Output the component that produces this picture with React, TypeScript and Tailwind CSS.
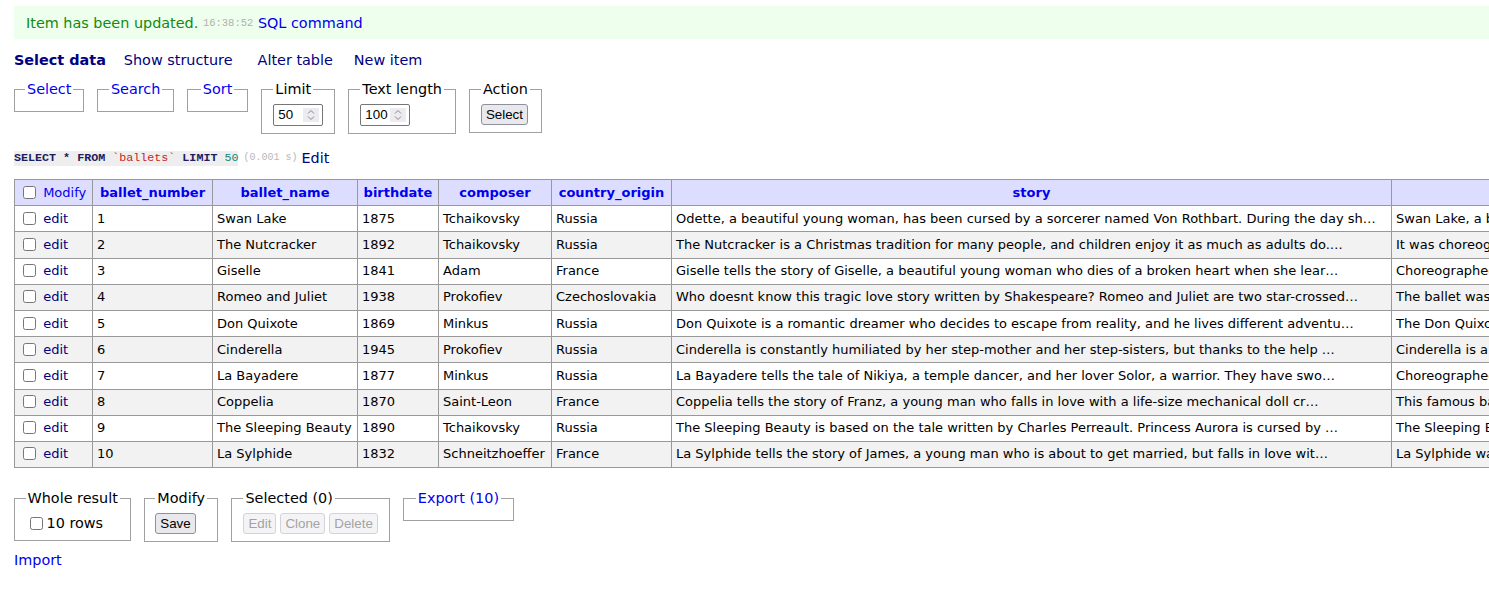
import React from "react";

const rows: [number, string, number, string, string, string, string][] = [
  [1, "Swan Lake", 1875, "Tchaikovsky", "Russia", "Odette, a beautiful young woman, has been cursed by a sorcerer named Von Rothbart. During the day sh…", "Swan Lake, a ballet in four acts, was first performed at the Bolshoi Theatre in Moscow…"],
  [2, "The Nutcracker", 1892, "Tchaikovsky", "Russia", "The Nutcracker is a Christmas tradition for many people, and children enjoy it as much as adults do.…", "It was choreographed by Marius Petipa and Lev Ivanov and premiered in Saint Petersburg…"],
  [3, "Giselle", 1841, "Adam", "France", "Giselle tells the story of Giselle, a beautiful young woman who dies of a broken heart when she lear…", "Choreographed by Jean Coralli and Jules Perrot, it premiered at the Paris Opera…"],
  [4, "Romeo and Juliet", 1938, "Prokofiev", "Czechoslovakia", "Who doesnt know this tragic love story written by Shakespeare? Romeo and Juliet are two star-crossed…", "The ballet was first staged in Brno and later became a classic of the Kirov Ballet…"],
  [5, "Don Quixote", 1869, "Minkus", "Russia", "Don Quixote is a romantic dreamer who decides to escape from reality, and he lives different adventu…", "The Don Quixote ballet was originally staged by Marius Petipa for the Bolshoi Ballet…"],
  [6, "Cinderella", 1945, "Prokofiev", "Russia", "Cinderella is constantly humiliated by her step-mother and her step-sisters, but thanks to the help …", "Cinderella is a ballet composed during the Second World War and premiered in Moscow…"],
  [7, "La Bayadere", 1877, "Minkus", "Russia", "La Bayadere tells the tale of Nikiya, a temple dancer, and her lover Solor, a warrior. They have swo…", "Choreographed by Marius Petipa, it was first presented by the Imperial Ballet…"],
  [8, "Coppelia", 1870, "Saint-Leon", "France", "Coppelia tells the story of Franz, a young man who falls in love with a life-size mechanical doll cr…", "This famous ballet was premiered at the Theatre Imperial de l'Opera in Paris…"],
  [9, "The Sleeping Beauty", 1890, "Tchaikovsky", "Russia", "The Sleeping Beauty is based on the tale written by Charles Perreault. Princess Aurora is cursed by …", "The Sleeping Beauty premiered at the Mariinsky Theatre in Saint Petersburg…"],
  [10, "La Sylphide", 1832, "Schneitzhoeffer", "France", "La Sylphide tells the story of James, a young man who is about to get married, but falls in love wit…", "La Sylphide was one of the first romantic ballets, choreographed by Filippo Taglioni…"],
];

// header name + column width as seen in the reference
const cols: [string, string][] = [
  ["ballet_number", "w-[120px]"],
  ["ballet_name", "w-[145px]"],
  ["birthdate", "w-[81px]"],
  ["composer", "w-[113px]"],
  ["country_origin", "w-[120px]"],
  ["story", "w-[720px]"],
  ["history", ""],
];

function NumberBox({ value }: { value: string }) {
  return (
    <div className="w-[50px] h-[22px] border border-[#767676] rounded-[2px] bg-white flex items-center justify-between pl-[4px] pr-[3px] text-[13.33px] font-['Liberation_Sans',sans-serif]">
      <span>{value}</span>
      <div className="w-[16px] h-[14px] bg-[#ececf0] flex items-center justify-center">
        <svg width="8" height="12" viewBox="0 0 8 12" fill="none" stroke="#888" strokeWidth="1">
          <path d="M1 4.5 L4 1.5 L7 4.5" />
          <path d="M1 7.5 L4 10.5 L7 7.5" />
        </svg>
      </div>
    </div>
  );
}

function Btn({ children, disabled }: { children: React.ReactNode; disabled?: boolean }) {
  return (
    <button
      className={
        disabled
          ? "h-[21px] px-[4px] border border-[#d4d4d8] rounded-[3px] bg-[#f4f4f6] text-[#a3a3a3] text-[13.33px] leading-[18px] font-['Liberation_Sans',sans-serif]"
          : "h-[21px] px-[4px] border border-[#8f8f9d] rounded-[3px] bg-[#e9e9ed] text-black text-[13.33px] leading-[18px] font-['Liberation_Sans',sans-serif]"
      }
    >
      {children}
    </button>
  );
}

function Box({ legend, link, pad = "px-[11.5px]", children }: { legend: string; link?: boolean; pad?: string; children?: React.ReactNode }) {
  return (
    <fieldset className={"border border-[#a0a0a0] pt-[6px] pb-[7px] " + pad}>
      <legend className={"px-[2px] leading-[18px] " + (link ? "text-[#0000ee]" : "text-black")}>{legend}</legend>
      {children}
    </fieldset>
  );
}

const cell = "border border-[#999] px-[4px] py-[2.6px] leading-[20px]";

export default function App() {
  return (
    <div className="w-full min-h-[589px] overflow-hidden bg-white text-black font-['DejaVu_Sans',sans-serif] text-[14.4px] leading-[18px]">
      <div className="pl-[14px] pt-[6px]">
        <div className="bg-[#eeffee] px-[12px] h-[33px] flex items-center text-[#108a10] whitespace-pre">
          <span>Item has been updated. </span>
          <span className="text-[10.5px] text-[#b0b0b0] font-['Liberation_Mono',monospace] leading-none pt-[2px]">16:38:52</span>
          <span> </span>
          <a className="text-[#0000ee]">SQL command</a>
        </div>

        <p className="mt-[12px] flex">
          <b className="text-[#000080] mr-[18px]">Select data</b>
          <a className="text-[#000080] mr-[25px]">Show structure</a>
          <a className="text-[#000080] mr-[21px]">Alter table</a>
          <a className="text-[#000080]">New item</a>
        </p>

        <div className="mt-[11px] flex items-start gap-[13px]">
          <Box legend="Select" link pad="px-[10px]" />
          <Box legend="Search" link pad="px-[10.5px]" />
          <Box legend="Sort" link pad="px-[13px]" />
          <Box legend="Limit" pad="px-[11px]">
            <NumberBox value="50" />
          </Box>
          <Box legend="Text length" pad="px-[11px]">
            <NumberBox value="100" />
          </Box>
          <Box legend="Action" pad="px-[11px]">
            <Btn>Select</Btn>
          </Box>
        </div>

        <p className="mt-[15px] flex items-center">
          <code className="bg-[#eeeeee] text-[11.7px] leading-[15px] font-['Liberation_Mono',monospace]">
            <b className="text-[#1c1c60]">SELECT</b> <b className="text-[#1c1c60]">*</b> <b className="text-[#1c1c60]">FROM</b>{" "}
            <span className="text-[#cc2222]">`ballets`</span> <b className="text-[#1c1c60]">LIMIT</b>{" "}
            <span className="text-[#118877]">50</span>
          </code>
          <span className="ml-[5px] text-[10px] text-[#b8b8b8] font-['Liberation_Mono',monospace]">(0.001 s)</span>
          <a className="ml-[4px] text-[#000080]">Edit</a>
        </p>

        <table className="mt-[12px] w-max border-collapse text-[13px] whitespace-nowrap">
          <thead>
            <tr className="bg-[#ddddff]">
              <td className={cell + " text-left w-[78px]"}>
                <input type="checkbox" className="ml-[4px] mr-[3px] align-[-2px]" /> <a className="text-[#0000ee]">Modify</a>
              </td>
              {cols.map(([c, w]) => (
                <th key={c} className={cell + " font-bold text-center " + w}>
                  <a className="text-[#0000ee]">{c}</a>
                </th>
              ))}
            </tr>
          </thead>
          <tbody>
            {rows.map((r, i) => (
              <tr key={r[0]} className={i % 2 === 1 ? "bg-[#f2f2f2]" : "bg-white"}>
                <td className={cell}>
                  <input type="checkbox" className="ml-[4px] mr-[3px] align-[-2px]" /> <a className="text-[#000080]">edit</a>
                </td>
                {r.map((v, j) => (
                  <td key={j} className={cell}>
                    {v}
                  </td>
                ))}
              </tr>
            ))}
          </tbody>
        </table>

        <div className="mt-[21px] flex items-start gap-[13px]">
          <Box legend="Whole result" pad="px-[10.5px]">
            <label className="flex items-center gap-[4px] leading-[20px]">
              <input type="checkbox" className="ml-[4px]" />
              10 rows
            </label>
          </Box>
          <Box legend="Modify" pad="px-[10px]">
            <Btn>Save</Btn>
          </Box>
          <Box legend="Selected (0)">
            <div className="flex gap-[4px]">
              <Btn disabled>Edit</Btn>
              <Btn disabled>Clone</Btn>
              <Btn disabled>Delete</Btn>
            </div>
          </Box>
          <Box legend="Export (10)" link />
        </div>

        <p className="mt-[9px]">
          <a className="text-[#0000ee]">Import</a>
        </p>
      </div>
    </div>
  );
}
